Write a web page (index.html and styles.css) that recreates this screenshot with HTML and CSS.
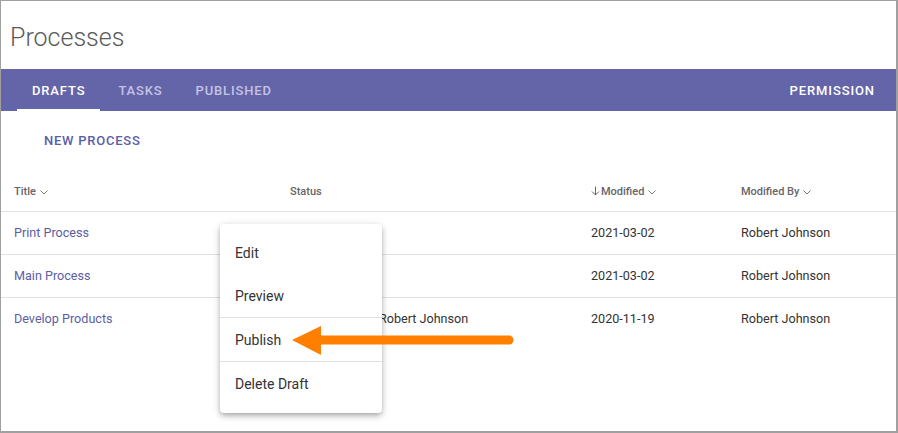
FILE: index.html
```html
<!DOCTYPE html>
<html>
<head>
<meta charset="utf-8">
<link rel="stylesheet" href="styles.css">
</head>
<body>
<div class="frame">
  <header class="page-head">
    <h1 class="page-title">Processes</h1>
  </header>
  <nav class="tabbar">
    <div class="tabs">
      <div class="tab active">DRAFTS</div>
      <div class="tab">TASKS</div>
      <div class="tab">PUBLISHED</div>
    </div>
    <div class="tab perm">PERMISSION</div>
  </nav>
  <div class="toolbar">
    <div class="btn-text">NEW PROCESS</div>
  </div>
  <div class="table">
    <div class="row head">
      <div class="cell">Title <svg class="chev" width="8" height="5" viewBox="0 0 8 5"><polyline points="0.5,0.5 4,4 7.5,0.5" fill="none" stroke="#777" stroke-width="1"/></svg></div>
      <div class="cell">Status</div>
      <div class="cell"><svg class="sort" width="9" height="10" viewBox="0 0 9 10"><path d="M4.5 0.5V9M1 5.5l3.5 3.5 3.5-3.5" fill="none" stroke="#666" stroke-width="1"/></svg>Modified <svg class="chev" width="8" height="5" viewBox="0 0 8 5"><polyline points="0.5,0.5 4,4 7.5,0.5" fill="none" stroke="#777" stroke-width="1"/></svg></div>
      <div class="cell">Modified By <svg class="chev" width="8" height="5" viewBox="0 0 8 5"><polyline points="0.5,0.5 4,4 7.5,0.5" fill="none" stroke="#777" stroke-width="1"/></svg></div>
    </div>
    <div class="row">
      <div class="cell link">Print Process</div>
      <div class="cell"></div>
      <div class="cell">2021-03-02</div>
      <div class="cell">Robert Johnson</div>
    </div>
    <div class="row">
      <div class="cell link">Main Process</div>
      <div class="cell"></div>
      <div class="cell">2021-03-02</div>
      <div class="cell">Robert Johnson</div>
    </div>
    <div class="row last">
      <div class="cell link">Develop Products</div>
      <div class="cell">Checked out by Robert Johnson</div>
      <div class="cell">2020-11-19</div>
      <div class="cell">Robert Johnson</div>
    </div>
  </div>
  <div class="menu">
    <div class="menu-item">Edit</div>
    <div class="menu-item">Preview</div>
    <div class="menu-sep"></div>
    <div class="menu-item">Publish</div>
    <div class="menu-sep"></div>
    <div class="menu-item">Delete Draft</div>
  </div>
  <svg class="arrow" width="230" height="34" viewBox="0 0 230 34">
    <line x1="30" y1="17" x2="219" y2="17" stroke="#ff8000" stroke-width="9" stroke-linecap="round"/>
    <polygon points="2,17 31,3 31,32" fill="#ff8000"/>
  </svg>
</div>
</body>
</html>
```

FILE: styles.css
```css
* { box-sizing: border-box; }
html, body { margin: 0; padding: 0; background: #fff; }
body { font-family: Roboto, "Liberation Sans", sans-serif; }
.frame {
  position: relative;
  width: 898px;
  height: 433px;
  border: 1px solid #a0a0a0;
  border-right-width: 2px;
  border-bottom-width: 2px;
  overflow: hidden;
}
.page-head {
  height: 68px;
  display: flex;
  align-items: center;
  padding-left: 9px;
}
.page-title {
  margin: 0;
  font-size: 25px;
  font-weight: 300;
  color: #5a5a5a;
  padding-top: 4px;
}
.tabbar {
  height: 42px;
  background: #6464a8;
  display: flex;
  justify-content: space-between;
  align-items: stretch;
  padding: 0 21px 0 16px;
}
.tabs { display: flex; gap: 3px; }
.tab {
  display: flex;
  align-items: center;
  padding: 0 15px;
  font-size: 13px;
  font-weight: 500;
  letter-spacing: 0.85px;
  color: #c3c3e3;
  position: relative;
}
.tab.active { color: #fff; }
.tab.active::after {
  content: "";
  position: absolute;
  left: 0; right: 0; bottom: 0;
  height: 2px;
  background: #fff;
}
.tab.perm { color: #fff; padding: 0; letter-spacing: 0.9px; }
.toolbar {
  height: 60px;
  padding: 11px 0 0 28px;
}
.btn-text {
  height: 36px;
  display: inline-flex;
  align-items: center;
  padding: 0 15px;
  font-size: 13px;
  font-weight: 500;
  letter-spacing: 0.75px;
  color: #5b5ea6;
}
.table { display: flex; flex-direction: column; }
.row {
  display: grid;
  grid-template-columns: 276px 301px 150px 1fr;
  padding-left: 13px;
  padding-bottom: 2px;
  height: 43px;
  align-items: center;
  border-bottom: 1px solid #e0e0e0;
  font-size: 12.6px;
  color: #333;
}
.row.head {
  height: 41px;
  padding-bottom: 0;
  font-size: 11px;
  font-weight: 500;
  color: #666;
}
.row.last { border-bottom: none; }
.cell { white-space: nowrap; display: flex; align-items: center; }
.link { color: #5b5ea6; }
.chev { margin-left: 4px; margin-top: 2px; }
.sort { margin-right: 1px; }
.menu {
  position: absolute;
  left: 219px;
  top: 223px;
  width: 162px;
  height: 189px;
  background: #fff;
  border-radius: 4px;
  box-shadow: 0 2px 4px -1px rgba(0,0,0,0.2), 0 4px 6px 0 rgba(0,0,0,0.14), 0 1px 10px 0 rgba(0,0,0,0.12);
  padding: 7px 0 8px;
}
.menu-item {
  height: 43px;
  display: flex;
  align-items: center;
  padding-left: 15px;
  font-size: 14px;
  color: #333;
}
.menu-sep { height: 1px; background: #e0e0e0; }
.arrow { position: absolute; left: 289px; top: 322px; }
```
